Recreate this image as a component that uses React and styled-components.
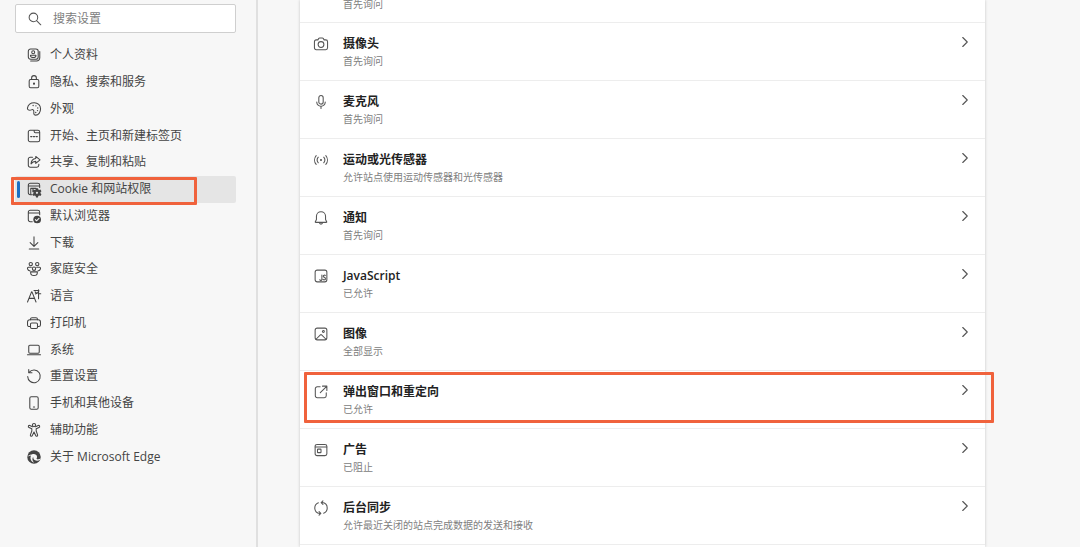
import { useState } from 'react';
import styled, { createGlobalStyle } from 'styled-components';

// 16x16 line icons, keyed by name
const icons = {
  search: (
    <>
      <circle cx="6.2" cy="6.2" r="4.9" />
      <path d="M9.800 9.800l4.800 4.800" />
    </>
  ),
  profile: (
    <>
      <rect x="1.5" y="1.2" width="11.3" height="11.6" rx="2.6" />
      <circle cx="7.1" cy="4.9" r="1.7" />
      <path d="M4 8.300h6.200v.5c0 1.300-1.400 2.100-3.100 2.100S4 10.100 4 8.800z" />
      <path d="M14.600 4v7.200a3.600 3.600 0 0 1-3.600 3.600H4.200" />
    </>
  ),
  lock: (
    <>
      <rect x="2.500" y="5.200" width="11" height="9.300" rx="1.600" />
      <path d="M5.300 5.200V3.400a2.700 2.700 0 0 1 5.400 0v1.800" />
      <circle cx="8" cy="9.900" r=".6" fill="currentColor" />
    </>
  ),
  palette: (
    <>
      <path d="M.5 7C1.200 3.200 4.300.8 8.300.8c4 0 7.200 3 7.200 7 0 4.300-2.500 7.200-5.500 7.200-1.700 0-2.400-1.100-2.200-2.600.2-1.700.3-3-.9-3.600-1.200-.6-2.100.6-3.500.6C1.400 9.400.3 8.200.5 7z" />
      <g fill="currentColor" stroke="none">
        <circle cx="7" cy="4" r=".8" />
        <circle cx="10.200" cy="4.400" r=".8" />
        <circle cx="12.300" cy="6.800" r=".8" />
        <circle cx="12" cy="9.800" r=".8" />
        <circle cx="10" cy="12" r=".8" />
      </g>
    </>
  ),
  start: (
    <>
      <rect x="1.500" y="1.500" width="13" height="13" rx="2" />
      <path d="M8.200 1.800v1c0 .9.500 1.400 1.400 1.400h4.600" />
      <path d="M4.300 8.700h1.200M7.400 8.700h1.200M10.500 8.700h1.200" strokeWidth="1.600" />
    </>
  ),
  share: (
    <>
      <path d="M6.300 2.500H3.700a2.200 2.200 0 0 0-2.200 2.200v7.100A2.200 2.200 0 0 0 3.700 14h7.600a2.200 2.200 0 0 0 2.200-2.200v-1.300" />
      <path d="M10 1.600l4.900 4-4.900 4V7.300c-2.300 0-4 .8-5.400 2.800.2-3.500 2-5.700 5.400-6.100z" />
    </>
  ),
  cookie: (
    <>
      <path d="M6 14.500H3.700a2.200 2.200 0 0 1-2.200-2.200V3.700c0-1.200 1-2.200 2.200-2.200h8.600c1.200 0 2.200 1 2.200 2.200v2.600M1.500 4.500h13" />
      <path d="M4.300 14.300V7.300h6M6.800 11V7.300" />
      <path
        d="M10.300 7h2.200l.4 1.500 1 .6 1.500-.4 1.100 1.900-1.100 1.100v1.200l1.100 1.100-1.100 1.900-1.500-.4-1 .6-.4 1.500h-2.200l-.4-1.500-1-.6-1.500.4-1.100-1.900 1.100-1.100v-1.200l-1.100-1.100 1.100-1.900 1.500.4 1-.6zM11.400 11a1.300 1.300 0 1 0 0 2.600 1.300 1.300 0 0 0 0-2.600z"
        fill="currentColor"
        fillRule="evenodd"
        stroke="none"
      />
    </>
  ),
  browser: (
    <>
      <path d="M6 14.500H3.700a2.200 2.200 0 0 1-2.200-2.200V3.700c0-1.200 1-2.200 2.200-2.200h8.600c1.200 0 2.200 1 2.200 2.200v2.800M1.500 4.500h13" />
      <circle cx="11.600" cy="12" r="4.400" fill="currentColor" stroke="none" />
      <path d="M9.600 12.200l1.300 1.300 2.800-2.900" stroke="#f7f7f7" />
    </>
  ),
  download: <path d="M8 1v10.800M3.600 7.500L8 11.900l4.400-4.400M2.600 14.800h10.800" />,
  family: (
    <>
      <circle cx="4.300" cy="2.400" r="1.900" />
      <circle cx="11.700" cy="2.400" r="1.900" />
      <circle cx="8" cy="7.700" r="1.900" />
      <path d="M5 6H1.600C0 6-.1 9.800 3.600 10.200M11 6h3.400c1.600 0 1.700 3.800-2 4.200" />
      <path d="M4.200 11.300h7.600v.9c0 1.900-1.600 3.200-3.800 3.200s-3.800-1.300-3.800-3.200z" />
    </>
  ),
  language: (
    <>
      <path d="M.6 14.800L5.200 3.300h.5l4.600 11.500M2.300 10.700h6.200" />
      <path d="M8 1.600h5.600c-.2 2-1.700 3.400-4 4M13.200.8v10.400M13.200 5.400h2.500M9.300 3.100c.4 1 .9 1.500 1.900 2" />
    </>
  ),
  printer: (
    <>
      <path d="M4 4.300V3.600c0-1 .8-1.600 1.700-1.600h4.600c1 0 1.700.7 1.700 1.600v.7" />
      <path d="M4 12H2.600C1.400 12 .6 11.300.6 10.200V6.800c0-1.500 1-2.500 2.600-2.500h9.600c1.600 0 2.600 1 2.600 2.500v3.400c0 1.100-.8 1.800-2 1.800H12" />
      <rect x="4" y="8" width="8" height="6.200" rx="1.400" />
    </>
  ),
  laptop: (
    <>
      <rect x="2" y="2.600" width="12" height="9" rx="1.300" />
      <path d="M.5 13.500h15" />
    </>
  ),
  reset: (
    <>
      <path d="M2.400 3.900A7.200 7.200 0 1 1 .8 8.500" />
      <path d="M2 .5v3.700h3.700" />
    </>
  ),
  phone: (
    <>
      <rect x="3.200" y=".8" width="9.600" height="14.400" rx="1.700" />
      <path d="M7.300 12.500h1.400" />
    </>
  ),
  access: (
    <>
      <circle cx="8" cy="2.400" r="1.800" />
      <path d="M6.300 4.200L3.200 2.800C1.600 2.200.8 4.500 2.300 5.100l3.200 1.400v2.700L3.900 13.500c-.5 1.600 1.600 2.300 2.200.8L8 10.300l1.900 4c.6 1.500 2.700.8 2.200-.8l-1.600-4.300V6.500l3.200-1.400c1.500-.6.7-2.900-.9-2.300L9.700 4.200" />
    </>
  ),
  edge: (
    <g stroke="none">
      <circle cx="8" cy="8" r="7.700" fill="currentColor" />
      <path
        d="M.4 8.300C1.500 5.900 3.500 4.900 5.500 5.100 8 3.900 11.300 5 11.500 7.700c.1 1-.4 1.600-.6 2.100-.2.600.9 1 2 .9 1-.1 1.900-.5 2.500-1-.2.600-.5 1.300-.8 1.800-1.700 1-4.100 1.100-5.800-.1-1.300-.9-1.900-2.300-1.600-3.800-1.600 1.800-1.300 4.800 1 6.900-1.500-.2-3-1.400-3.700-3-.8-1.800-.7-3.800.2-5.200C2.900 6.300 1.300 7.100.4 8.300z"
        fill="#f7f7f7"
      />
    </g>
  ),
  camera: (
    <>
      <path d="M2.600 3.300h1.800l1.100-1.700c.2-.3.500-.5.900-.5h3.200c.4 0 .7.200.9.500l1.100 1.700h1.800c1.300 0 2.100.8 2.100 2.100v7c0 1.300-.8 2.100-2.100 2.100H2.600c-1.300 0-2.100-.8-2.100-2.100v-7c0-1.300.8-2.100 2.100-2.100z" />
      <circle cx="8" cy="8.600" r="3.300" />
    </>
  ),
  mic: (
    <>
      <rect x="5.500" y=".6" width="5" height="9.800" rx="2.500" />
      <path d="M3.200 8v.5A4.500 4.500 0 0 0 8 12.800a4.500 4.500 0 0 0 4.800-4.300V8M8 12.800v2.600" />
    </>
  ),
  sensor: (
    <>
      <circle cx="8" cy="8" r="1.200" fill="currentColor" stroke="none" />
      <path d="M2.500 3C0 5.900 0 10.100 2.500 13M4.900 4.800c-1.700 2-1.700 4.400 0 6.400M13.500 3c2.500 2.900 2.500 7.100 0 10M11.100 4.800c1.700 2 1.700 4.400 0 6.400" />
    </>
  ),
  bell: (
    <>
      <path d="M8 .9c-3 0-5.200 2.300-5.200 5.200v3.500l-1.300 2.600c-.2.400 0 .8.500.8h12c.5 0 .7-.4.5-.8l-1.300-2.600V6.100C13.200 3.200 11 .9 8 .9z" />
      <path d="M6.200 13.100c.1 2.500 3.500 2.500 3.600 0" />
    </>
  ),
  script: (
    <>
      <rect x="1.300" y="1.300" width="13.400" height="13.400" rx="2.300" />
      <path d="M9 6.800v5.200c0 1.500-2.300 1.500-2.300 0M13 7.300c-.8-.6-2.400-.3-2.400.9 0 1.500 2.500 1.100 2.500 2.800 0 1.600-1.900 1.800-2.800.9" />
    </>
  ),
  image: (
    <>
      <rect x="1.300" y="1.300" width="13.400" height="13.400" rx="2.300" />
      <circle cx="10.700" cy="5.200" r="1.100" />
      <path d="M2.300 14l5-5c.4-.4 1-.4 1.400 0l5 5" />
    </>
  ),
  popup: (
    <>
      <path d="M7 2H3.700a2.200 2.200 0 0 0-2.200 2.200v8.100a2.200 2.200 0 0 0 2.200 2.200h8.100a2.200 2.200 0 0 0 2.200-2.200V9" />
      <path d="M9.700 1.300h5v5M14.500 1.500L7.200 8.800" />
    </>
  ),
  ads: (
    <>
      <rect x="1.300" y="1.600" width="13.400" height="12.800" rx="2.200" />
      <path d="M1.500 4.500h13" />
      <rect x="4" y="7" width="4" height="4" rx=".5" />
    </>
  ),
  sync: (
    <>
      <path d="M6.800 14.200C3.300 13.900.9 11.300.9 8c0-2.700 1.700-5 4.100-5.900M9.200 1.800c3.500.3 5.900 2.900 5.900 6.200 0 2.700-1.700 5-4.100 5.900" />
      <path d="M10.200-.2L8.200 1.800l2 2M5.800 16.200l2-2-2-2" />
    </>
  ),
  chevron: <path d="M5 2l6 6-6 6" strokeWidth="1.500" />,
};

const navItems = [
  { icon: 'profile', label: '个人资料' },
  { icon: 'lock', label: '隐私、搜索和服务' },
  { icon: 'palette', label: '外观' },
  { icon: 'start', label: '开始、主页和新建标签页' },
  { icon: 'share', label: '共享、复制和粘贴' },
  { icon: 'cookie', label: 'Cookie 和网站权限', marked: true },
  { icon: 'browser', label: '默认浏览器' },
  { icon: 'download', label: '下载' },
  { icon: 'family', label: '家庭安全' },
  { icon: 'language', label: '语言' },
  { icon: 'printer', label: '打印机' },
  { icon: 'laptop', label: '系统' },
  { icon: 'reset', label: '重置设置' },
  { icon: 'phone', label: '手机和其他设备' },
  { icon: 'access', label: '辅助功能' },
  { icon: 'edge', label: '关于 Microsoft Edge' },
];

const permissions = [
  { icon: 'camera', title: '摄像头', status: '首先询问' },
  { icon: 'mic', title: '麦克风', status: '首先询问' },
  { icon: 'sensor', title: '运动或光传感器', status: '允许站点使用运动传感器和光传感器' },
  { icon: 'bell', title: '通知', status: '首先询问' },
  { icon: 'script', title: 'JavaScript', status: '已允许' },
  { icon: 'image', title: '图像', status: '全部显示' },
  { icon: 'popup', title: '弹出窗口和重定向', status: '已允许', marked: true },
  { icon: 'ads', title: '广告', status: '已阻止' },
  { icon: 'sync', title: '后台同步', status: '允许最近关闭的站点完成数据的发送和接收' },
];

const Icon = ({ name, size = 14 }) => (
  <Glyph viewBox="0 0 16 16" $size={size} aria-hidden="true">
    {icons[name]}
  </Glyph>
);

export default function App() {
  const [query, setQuery] = useState('');
  const [active, setActive] = useState('cookie');

  return (
    <>
      <GlobalStyle />
      <Page>
        <Sidebar>
          <SearchBox>
            <Icon name="search" />
            <SearchInput
              type="text"
              aria-label="搜索设置"
              placeholder="搜索设置"
              value={query}
              onChange={(e) => setQuery(e.target.value)}
            />
          </SearchBox>
          <NavList>
            {navItems.map((item) => (
              <NavItem key={item.icon}>
                <NavLink
                  href={`#${item.icon}`}
                  $active={item.icon === active}
                  onClick={() => setActive(item.icon)}
                >
                  <Icon name={item.icon} />
                  {item.label}
                </NavLink>
                {item.marked && <NavMark />}
              </NavItem>
            ))}
          </NavList>
        </Sidebar>
        <Content>
          <Card>
            <PartialRow>
              <Status>首先询问</Status>
            </PartialRow>
            {permissions.map((item) => (
              <Row key={item.icon}>
                <RowButton type="button">
                  <IconCell>
                    <Icon name={item.icon} />
                  </IconCell>
                  <Details>
                    <Title>{item.title}</Title>
                    <Status>{item.status}</Status>
                  </Details>
                  <Icon name="chevron" size={12} />
                </RowButton>
                {item.marked && <RowMark />}
              </Row>
            ))}
          </Card>
        </Content>
      </Page>
    </>
  );
}

// Styled Components
const GlobalStyle = createGlobalStyle`
  * {
    box-sizing: border-box;
  }

  body {
    margin: 0;
    background: #f7f7f7;
    color: #444;
    font-family: "Open Sans", "Noto Sans CJK SC", sans-serif;
    font-size: 12px;
    line-height: 16px;
  }
`;

const Page = styled.div`
  display: flex;
  height: 100vh;
  overflow: hidden;
`;

const Glyph = styled.svg`
  flex: none;
  width: ${({ $size }) => $size}px;
  height: ${({ $size }) => $size}px;
  overflow: visible;
  fill: none;
  stroke: currentColor;
  stroke-width: 1.2;
  stroke-linecap: round;
  stroke-linejoin: round;
`;

const Sidebar = styled.nav`
  flex: none;
  width: 258px;
  padding: 4px 20px 0 15px;
  border-right: 2px solid #e0e0e0;
`;

const SearchBox = styled.label`
  display: flex;
  align-items: center;
  gap: 11px;
  height: 29px;
  padding: 0 12px;
  border: 1px solid #cfcfcf;
  border-radius: 2px;
  background: #fff;
  color: #555;
`;

const SearchInput = styled.input`
  flex: 1;
  min-width: 0;
  padding: 0;
  border: none;
  outline: none;
  background: transparent;
  font: inherit;

  &::placeholder {
    color: #808080;
  }
`;

const NavList = styled.ul`
  display: grid;
  grid-auto-rows: 1fr;
  height: 428px;
  margin: 9px 0 0;
  padding: 0;
  list-style: none;
`;

const NavItem = styled.li`
  position: relative;
  display: flex;
`;

const NavLink = styled.a`
  position: relative;
  display: flex;
  flex: 1;
  align-items: center;
  gap: 9px;
  padding-left: 12px;
  border-radius: 2px;
  background: ${({ $active }) => ($active ? '#e5e5e5' : 'transparent')};
  color: #444;
  text-decoration: none;

  &::before {
    content: '';
    display: ${({ $active }) => ($active ? 'block' : 'none')};
    position: absolute;
    left: 2px;
    top: 5px;
    bottom: 5px;
    width: 3px;
    border-radius: 2px;
    background: #1a6fc4;
  }

  &:hover {
    background: #e5e5e5;
  }
`;

const Mark = styled.div`
  position: absolute;
  border: 3px solid #f0623c;
  border-radius: 1px;
  pointer-events: none;
`;

const NavMark = styled(Mark)`
  top: 1px;
  right: 39px;
  bottom: -2px;
  left: -4px;
`;

const RowMark = styled(Mark)`
  top: 1px;
  right: -9px;
  bottom: 5px;
  left: 4px;
`;

const Content = styled.main`
  display: flex;
  flex: 1;
  min-width: 0;
  padding: 0 95px 0 42px;
`;

const Card = styled.section`
  flex: 1;
  min-width: 0;
  background: #fff;
  box-shadow: 0 0 3px rgba(0, 0, 0, 0.2);
`;

const Row = styled.div`
  position: relative;
  border-bottom: 1px solid #ededed;
`;

const PartialRow = styled(Row)`
  height: 23px;
  padding: 0 0 10px 43px;
  display: flex;
  align-items: flex-end;
`;

const RowButton = styled.button`
  display: flex;
  width: 100%;
  padding: 13px 14px 11px;
  border: none;
  background: transparent;
  color: #555;
  font: inherit;
  text-align: left;
  cursor: pointer;
`;

const IconCell = styled.span`
  display: flex;
  padding-top: 1px;
  margin-right: 15px;
`;

const Details = styled.span`
  display: flex;
  flex: 1;
  flex-direction: column;
  gap: 1px;
`;

const Title = styled.span`
  color: #222;
  font-weight: 600;
`;

const Status = styled.span`
  color: #808080;
  font-size: 10px;
`;
